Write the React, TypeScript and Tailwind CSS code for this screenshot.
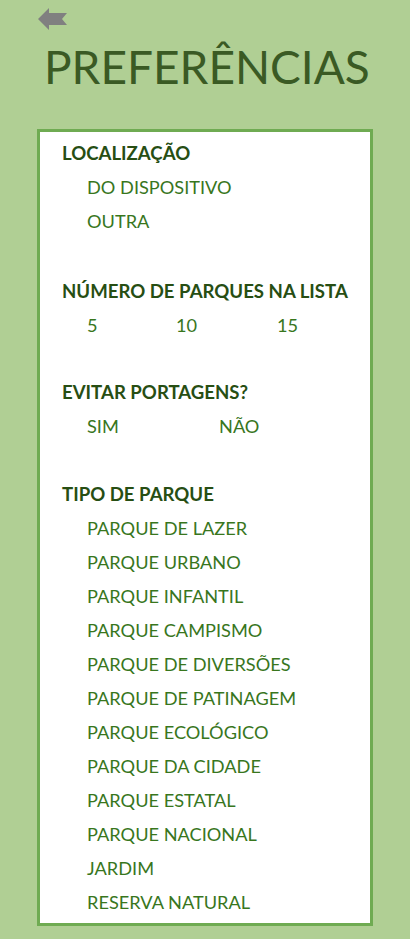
import React from 'react';

const heading = 'text-[18.6px] font-bold text-[#274e13] leading-[34px] h-[34px] whitespace-nowrap';
const option = 'text-[18.2px] text-[#38761d] leading-[34px] h-[34px] whitespace-nowrap';

const parkTypes = [
  'PARQUE DE LAZER',
  'PARQUE URBANO',
  'PARQUE INFANTIL',
  'PARQUE CAMPISMO',
  'PARQUE DE DIVERSÕES',
  'PARQUE DE PATINAGEM',
  'PARQUE ECOLÓGICO',
  'PARQUE DA CIDADE',
  'PARQUE ESTATAL',
  'PARQUE NACIONAL',
  'JARDIM',
  'RESERVA NATURAL',
];

const BackArrow = () => (
  <svg width="30" height="23" viewBox="38 8 30 23" className="block">
    <path d="M38 19 L49 8 L49 13 L67 13 L62 19 L67 25 L49 25 L49 30 Z" fill="#808080" />
  </svg>
);

export default function App() {
  return (
    <div className="w-[410px] h-[939px] bg-[#b0cf94] overflow-hidden" style={{ fontFamily: 'Lato, "Noto Sans", sans-serif' }}>
      <div className="pt-[8px] pl-[38px]">
        <BackArrow />
      </div>

      <h1 className="mt-[6px] pl-[44px] text-[46px] leading-[60px] text-[#3a5a24] whitespace-nowrap">
        PREFERÊNCIAS
      </h1>

      <div className="mt-[32px] mx-[37px] h-[797px] bg-white border-[3px] border-[#6fab52] pl-[22px] pt-[4px]">
        <div className={heading}>LOCALIZAÇÃO</div>
        <div className="pl-[25px]">
          <div className={option}>DO DISPOSITIVO</div>
          <div className={option}>OUTRA</div>
        </div>

        <div className={`${heading} mt-[36px]`}>NÚMERO DE PARQUES NA LISTA</div>
        <div className={`${option} pl-[25px] flex`}>
          <span className="w-[89px]">5</span>
          <span className="w-[101px]">10</span>
          <span>15</span>
        </div>

        <div className={`${heading} mt-[33px]`}>EVITAR PORTAGENS?</div>
        <div className={`${option} pl-[25px] flex`}>
          <span className="w-[132px]">SIM</span>
          <span>NÃO</span>
        </div>

        <div className={`${heading} mt-[34px]`}>TIPO DE PARQUE</div>
        <div className="pl-[25px]">
          {parkTypes.map(t => (
            <div key={t} className={option}>{t}</div>
          ))}
        </div>
      </div>
    </div>
  );
}
